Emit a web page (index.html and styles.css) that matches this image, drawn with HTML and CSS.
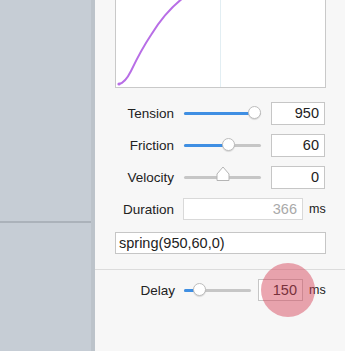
FILE: index.html
```html
<!DOCTYPE html>
<html lang="en">

<head>
    <meta charset="UTF-8">
    <meta name="viewport" content="width=device-width, initial-scale=1.0">
    <title>Spring editor</title>
    <link rel="stylesheet" href="styles.css">
</head>

<body>
    <div class="sidebar">
        <div class="sidebar-top"></div>
        <div class="sidebar-bottom"></div>
    </div>

    <div class="panel">
        <div class="graph">
            <svg width="210" height="88" viewBox="0 0 210 88">
                <line x1="105.5" y1="0" x2="105.5" y2="88" stroke="#e2eef3" stroke-width="1" />
                <path d="M4 84 Q 10 83 16 71 Q 26 50 36 35 Q 50 12 68 -2" fill="none" stroke="#b86ee6" stroke-width="2" stroke-linecap="round" />
                <circle cx="4" cy="84" r="1.6" fill="#b86ee6" />
            </svg>
        </div>

        <div class="row">
            <label class="label">Tension</label>
            <div class="slider">
                <div class="fill" style="width: 70px"></div>
                <div class="thumb" style="left: 70px"></div>
            </div>
            <div class="field">950</div>
        </div>

        <div class="row">
            <label class="label">Friction</label>
            <div class="slider">
                <div class="fill" style="width: 44px"></div>
                <div class="thumb" style="left: 44px"></div>
            </div>
            <div class="field">60</div>
        </div>

        <div class="row">
            <label class="label">Velocity</label>
            <div class="slider">
                <svg class="pointer" width="14" height="16" viewBox="0 0 14 16" style="left: 39px">
                    <path d="M7 1 L13 8 L13 14.5 L1 14.5 L1 8 Z" fill="#fff" stroke="#b5b5b5" stroke-width="1" stroke-linejoin="round" />
                </svg>
            </div>
            <div class="field">0</div>
        </div>

        <div class="row">
            <label class="label">Duration</label>
            <div class="field field-wide disabled">366</div>
            <span class="unit">ms</span>
        </div>

        <div class="curve-field">spring(950,60,0)</div>

        <div class="separator"></div>

        <div class="row row-delay">
            <label class="label label-delay">Delay</label>
            <div class="slider slider-short">
                <div class="fill" style="width: 15px"></div>
                <div class="thumb" style="left: 15px"></div>
            </div>
            <div class="field field-delay">150</div>
            <span class="unit">ms</span>
            <div class="touch"></div>
        </div>
    </div>
</body>

</html>
```

FILE: styles.css
```css
html,
body {
    margin: 0;
    height: 100%;
}

body {
    display: flex;
    font-family: "Liberation Sans", Arial, sans-serif;
    color: #222;
    background-color: #f7f7f7;
    overflow: hidden;
}

.sidebar {
    width: 91px;
    flex-shrink: 0;
    display: flex;
    flex-direction: column;
    background-color: #c6cdd5;
    border-right: 4px solid #bcc3ca;
}

.sidebar-top {
    height: 221px;
    border-bottom: 2px solid #abb2ba;
}

.panel {
    flex: 1;
    padding: 0 20px;
    background-color: #f7f7f7;
}

.graph {
    height: 88px;
    background: #fff;
    border: 1px solid #c9c9c9;
    border-top: none;
    box-sizing: border-box;
    margin-bottom: 9px;
    overflow: hidden;
}

.graph svg {
    display: block;
    margin-left: -1px;
}

.row {
    display: flex;
    align-items: center;
    height: 32px;
}

.label {
    width: 59px;
    text-align: right;
    font-size: 13.5px;
    margin-right: 10px;
}

.slider {
    position: relative;
    width: 77px;
    height: 3px;
    border-radius: 2px;
    background: #c6c6c6;
    margin-right: 10px;
}

.slider-short {
    width: 67px;
    margin-right: 7px;
}

.fill {
    height: 3px;
    border-radius: 2px;
    background: #3f8fe3;
}

.thumb {
    position: absolute;
    top: -6px;
    width: 13px;
    height: 13px;
    margin-left: -6px;
    border-radius: 50%;
    background: #fff;
    border: 1px solid #bdbdbd;
    box-sizing: border-box;
    box-shadow: 0 1px 1px rgba(0, 0, 0, 0.12);
}

.pointer {
    position: absolute;
    top: -10px;
    margin-left: -7px;
}

.field {
    width: 54px;
    height: 23px;
    box-sizing: border-box;
    background: #fff;
    border: 1px solid #c6c6c6;
    font-size: 14.5px;
    line-height: 21px;
    text-align: right;
    padding-right: 5px;
}

.field-wide {
    width: 120px;
    height: 22px;
    line-height: 20px;
    margin-left: -1px;
}

.disabled {
    color: #a9a9a9;
    border-color: #d9d9d9;
}

.unit {
    font-size: 12.5px;
    margin-left: 6px;
}

.curve-field {
    margin-top: 7px;
    height: 22px;
    box-sizing: border-box;
    background: #fff;
    border: 1px solid #c6c6c6;
    font-size: 14.5px;
    line-height: 20px;
    padding-left: 3px;
}

.separator {
    height: 1px;
    background: #dcdcdc;
    margin: 15px -20px 0;
}

.row-delay {
    position: relative;
    margin-top: 4px;
}

.label-delay {
    width: 60px;
    margin-right: 9px;
}

.field-delay {
    width: 45px;
    height: 22px;
    line-height: 20px;
}

.touch {
    position: absolute;
    left: 146px;
    top: -11px;
    width: 54px;
    height: 54px;
    border-radius: 50%;
    background: rgba(214, 70, 90, 0.48);
    pointer-events: none;
}
```
